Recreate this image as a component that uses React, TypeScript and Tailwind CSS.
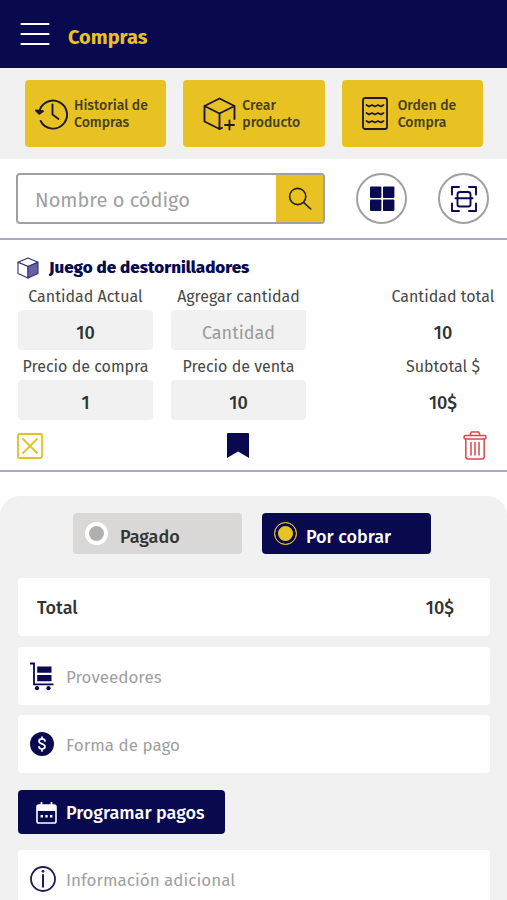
import { useState } from "react";

const MenuIcon = () => (
  <svg width="30" height="24" viewBox="0 0 30 24" fill="none" stroke="white" strokeWidth="2.2" strokeLinecap="round">
    <path d="M1.5 2H28.5M1.5 12H28.5M1.5 22H28.5" />
  </svg>
);

const HistoryIcon = () => (
  <svg width="33" height="32" viewBox="0 0 33 32" fill="none" stroke="#1d1838" strokeWidth="1.9" strokeLinecap="round" strokeLinejoin="round">
    <path d="M4.2 14.5A14 14 0 1 1 5.6 23" />
    <path d="M1 12.5L4.3 15.8L8 13.2Z" fill="#1d1838" />
    <path d="M17.5 6.5V16.5L23.5 21" />
  </svg>
);

const CreateIcon = () => (
  <svg width="33" height="34" viewBox="0 0 33 34" fill="none" stroke="#1d1838" strokeWidth="1.9" strokeLinecap="round" strokeLinejoin="round">
    <path d="M16.5 1.5L31.5 9L16.5 16.5L1.5 9ZM1.5 9V24.5L16.5 32V16.5M31.5 9V22" />
    <path d="M26.5 23.5V32.5M22 28H31M16.5 32L19 30.8" />
  </svg>
);

const OrderIcon = () => (
  <svg width="26" height="33" viewBox="0 0 26 33" fill="none" stroke="#1d1838" strokeWidth="1.8" strokeLinecap="round" strokeLinejoin="round">
    <rect x="1" y="1" width="24" height="31" rx="2" />
    <path d="M4.5 8L7 9.5L10 8L13 9.5L16 8L19 9.5L21.5 8M4.5 16L7 17.5L10 16L13 17.5L16 16L19 17.5L21.5 16M4.5 24L7 25.5L10 24L13 25.5L16 24L19 25.5L21.5 24" />
  </svg>
);

const SearchIcon = () => (
  <svg width="24" height="24" viewBox="0 0 24 24" fill="none" stroke="#26221c" strokeWidth="1.6" strokeLinecap="round">
    <circle cx="9.7" cy="9.5" r="8.1" />
    <path d="M15.5 15.3L22.7 22" />
  </svg>
);

const GridIcon = () => (
  <svg width="26" height="26" viewBox="0 0 26 26" fill="#09094f">
    <rect x="1" y="0.5" width="11.4" height="11.4" rx="1" />
    <rect x="14" y="0.5" width="11.4" height="11.4" rx="1" />
    <rect x="1" y="13.6" width="11.4" height="11.4" rx="1" />
    <rect x="14" y="13.6" width="11.4" height="11.4" rx="1" />
  </svg>
);

const ScanIcon = () => (
  <svg width="28" height="28" viewBox="0 0 28 28" fill="none" stroke="#09094f" strokeWidth="1.9" strokeLinecap="round" strokeLinejoin="round">
    <path d="M2 9.5V2H9M19 2H26V9.5M26 18.5V26H19M9 26H2V18.5" />
    <path d="M7.5 12.5V9.5Q7.5 7 10 7H18Q20.5 7 20.5 9.5V12.5M7.5 14V19.5Q7.5 21.5 9.5 21.5H18.5Q20.5 21.5 20.5 19.5V14" />
    <path d="M5.5 13.3H22.5" />
  </svg>
);

const CubeIcon = () => (
  <svg width="22" height="22" viewBox="0 0 22 22" strokeLinejoin="round" stroke="#34336f" strokeWidth="1.1">
    <path d="M11 1L21 5.2L11 9.6L1 5.2Z" fill="white" />
    <path d="M1 5.2L11 9.6V21L1 16.5Z" fill="white" />
    <path d="M21 5.2L11 9.6V21L21 16.5Z" fill="#6462a2" />
  </svg>
);

const CloseBoxIcon = () => (
  <svg width="26" height="26" viewBox="0 0 26 26" fill="none" stroke="#e5be2b" strokeWidth="1.8" strokeLinecap="round">
    <rect x="1" y="1" width="24" height="24" rx="1.5" />
    <path d="M6 6L20 20M20 6L6 20" />
  </svg>
);

const BookmarkIcon = () => (
  <svg width="22" height="25" viewBox="0 0 22 25" fill="#09094f">
    <path d="M1 0H21Q22 0 22 1V25L11 18.5L0 25V1Q0 0 1 0Z" />
  </svg>
);

const TrashIcon = () => (
  <svg width="24" height="29" viewBox="0 0 24 29" fill="none" stroke="#d8494c" strokeWidth="1.5" strokeLinecap="round" strokeLinejoin="round">
    <path d="M7 4.5L8.2 1H15.8L17 4.5" />
    <rect x="1" y="4.5" width="22" height="3.6" rx="1.6" />
    <path d="M2.8 8.1V25.5Q2.8 28 5.3 28H18.7Q21.2 28 21.2 25.5V8.1" />
    <path d="M8 11.5V24M12 11.5V24M16 11.5V24" />
  </svg>
);

const CartIcon = () => (
  <svg width="24" height="29" viewBox="0 0 24 29" fill="none" stroke="#09094f">
    <path d="M0 1.5H4V22.3H23.5" strokeWidth="1.8" />
    <path d="M7.2 4.5H21.5V10.7H7.2ZM7.2 13H21.5V19.2H7.2Z" fill="#09094f" stroke="none" />
    <circle cx="7" cy="26.2" r="2.1" fill="#09094f" stroke="none" />
    <circle cx="18.5" cy="26.2" r="2.1" fill="#09094f" stroke="none" />
  </svg>
);

const DollarIcon = () => (
  <svg width="24" height="24" viewBox="0 0 24 24" fill="none" stroke="white" strokeWidth="1.7" strokeLinecap="round">
    <circle cx="12" cy="12" r="12" fill="#09094f" stroke="none" />
    <path d="M15 9C15 7.6 13.8 6.9 12 6.9S9 7.8 9 9.3C9 12.6 15 11.2 15 14.6C15 16.1 13.8 17 12 17S9 16.2 9 14.8M12 5V6.9M12 17V19" />
  </svg>
);

const CalendarIcon = () => (
  <svg width="21" height="22" viewBox="0 0 21 22" fill="none">
    <path d="M5.5 0.8V4M15.5 0.8V4" stroke="white" strokeWidth="1.8" strokeLinecap="round" />
    <rect x="1" y="3" width="19" height="18" rx="1.8" stroke="white" strokeWidth="1.6" />
    <path d="M1 3H20V9H1Z" fill="white" />
    <path d="M4.6 13H7V15.4H4.6ZM9.3 13H11.7V15.4H9.3ZM14 13H16.4V15.4H14Z" fill="white" />
  </svg>
);

const InfoIcon = () => (
  <svg width="26" height="26" viewBox="0 0 26 26" fill="none" stroke="#1c1a62">
    <circle cx="13" cy="13" r="12" strokeWidth="1.8" />
    <path d="M13 8.2V21.5" strokeWidth="2" />
    <circle cx="13" cy="5.3" r="1.4" fill="#1c1a62" stroke="none" />
  </svg>
);

const actions = [
  { lines: ["Historial de", "Compras"], Icon: HistoryIcon, style: "pl-[10px] gap-[6px]" },
  { lines: ["Crear", "producto"], Icon: CreateIcon, style: "pl-5 gap-[6px]" },
  { lines: ["Orden de", "Compra"], Icon: OrderIcon, style: "pl-5 gap-[10px]" },
];

function Field({ id, label, value, placeholder }: { id: string; label: string; value?: string; placeholder?: string }) {
  return (
    <div className="flex flex-col items-center">
      <label htmlFor={id} className="text-base leading-[26px] whitespace-nowrap">
        {label}
      </label>
      <input
        id={id}
        defaultValue={value}
        placeholder={placeholder}
        className="h-10 w-full rounded-sm bg-[#f1f1f1] pt-[6px] text-center text-lg font-medium text-[#333] outline-none placeholder:font-normal placeholder:text-[#9b9b9b]"
      />
    </div>
  );
}

function Total({ label, value }: { label: string; value: string }) {
  return (
    <div className="flex w-[106px] flex-col items-center justify-self-end">
      <span className="text-base leading-[26px] whitespace-nowrap">{label}</span>
      <span className="flex h-10 items-center pt-[6px] text-lg font-medium text-[#333]">{value}</span>
    </div>
  );
}

function DetailInput({ id, label, Icon }: { id: string; label: string; Icon: () => React.ReactNode }) {
  return (
    <div className="flex h-[58px] items-center rounded bg-white pl-3">
      <label htmlFor={id} aria-label={label} className="flex w-9 shrink-0">
        <Icon />
      </label>
      <input
        id={id}
        placeholder={label}
        className="h-full min-w-0 flex-1 bg-transparent pt-[2px] text-[17px] outline-none placeholder:text-[#a0a0a0]"
      />
    </div>
  );
}

export default function App() {
  const [status, setStatus] = useState("cobrar");

  return (
    <div className="min-h-screen bg-white font-['Fira_Sans','Noto_Sans',sans-serif] text-[#484848]">
      <header className="flex h-[68px] items-center gap-[18px] bg-[#09094f] pl-5">
        <button aria-label="Menú">
          <MenuIcon />
        </button>
        <h1 className="pt-[6px] text-xl font-bold text-[#e8c222]">Compras</h1>
      </header>

      <nav className="grid grid-cols-3 gap-[17px] bg-[#f1f1f1] py-3 pr-6 pl-[25px]">
        {actions.map(({ lines, Icon, style }) => (
          <button key={lines[0]} className={`flex h-[67px] items-center rounded bg-[#e8c222] text-left ${style}`}>
            <Icon />
            <span className="text-sm leading-[17px] font-medium whitespace-nowrap text-[#45401c]">
              {lines[0]}
              <br />
              {lines[1]}
            </span>
          </button>
        ))}
      </nav>

      <div className="flex items-center border-b-2 border-[#a9a8c0] py-[14px] pr-[18px] pl-4">
        <form className="flex h-[51px] flex-1 overflow-hidden rounded border-2 border-[#a0a0a0]" onSubmit={(e) => e.preventDefault()}>
          <input
            aria-label="Nombre o código"
            placeholder="Nombre o código"
            className="min-w-0 flex-1 pt-[2px] pl-[17px] text-xl outline-none placeholder:text-[#a0a0a0]"
          />
          <button aria-label="Buscar" className="flex w-[47px] items-center justify-center bg-[#e8c222]">
            <SearchIcon />
          </button>
        </form>
        <button aria-label="Ver cuadrícula" className="ml-[31px] flex size-[51px] items-center justify-center rounded-full border-2 border-[#a0a0a0]">
          <GridIcon />
        </button>
        <button aria-label="Escanear código" className="ml-[31px] flex size-[51px] items-center justify-center rounded-full border-2 border-[#a0a0a0]">
          <ScanIcon />
        </button>
      </div>

      <section className="border-b-2 border-[#a9a8c0] pt-[14px] pb-[10px]">
        <div className="flex items-center gap-[10px] pb-[2px] pl-[17px]">
          <CubeIcon />
          <h2 className="text-[17px] leading-7 font-extrabold text-[#09094f]">Juego de destornilladores</h2>
        </div>
        <div className="grid grid-cols-[135px_135px_1fr] gap-x-[18px] gap-y-1 pr-[11px] pl-[18px]">
          <Field id="actual" label="Cantidad Actual" value="10" />
          <Field id="agregar" label="Agregar cantidad" placeholder="Cantidad" />
          <Total label="Cantidad total" value="10" />
          <Field id="compra" label="Precio de compra" value="1" />
          <Field id="venta" label="Precio de venta" value="10" />
          <Total label="Subtotal $" value="10$" />
        </div>
        <div className="grid grid-cols-[135px_135px_1fr] items-center gap-x-[18px] pt-[11px] pr-5 pl-[17px]">
          <button aria-label="Quitar" className="justify-self-start">
            <CloseBoxIcon />
          </button>
          <button aria-label="Guardar" className="justify-self-center">
            <BookmarkIcon />
          </button>
          <button aria-label="Eliminar" className="justify-self-end">
            <TrashIcon />
          </button>
        </div>
      </section>

      <section className="mt-6 rounded-t-[20px] bg-[#f1f1f1] pt-[17px] pr-[17px] pl-[18px]">
        <div className="flex justify-center gap-5 pr-1">
          {[
            { id: "pagado", label: "Pagado" },
            { id: "cobrar", label: "Por cobrar" },
          ].map(({ id, label }) => {
            const checked = status === id;
            return (
              <label
                key={id}
                className={`flex h-[41px] w-[169px] items-center rounded-sm pl-3 text-lg font-medium ${
                  checked ? "gap-[9px] bg-[#09094f] text-white" : "gap-3 bg-[#dad8d7] text-[#333]"
                }`}
              >
                <input
                  type="radio"
                  name="estado"
                  checked={checked}
                  onChange={() => setStatus(id)}
                  className={`size-[23px] appearance-none rounded-full ${
                    checked
                      ? "border border-[#e8c222] bg-[#e8c222] shadow-[inset_0_0_0_3px_#09094f]"
                      : "border-4 border-white bg-[#b0b0b0]"
                  }`}
                />
                <span className="pt-[6px]">{label}</span>
              </label>
            );
          })}
        </div>

        <div className="mt-6 flex h-[58px] items-center justify-between rounded bg-white pt-[2px] pr-9 pl-[19px] text-lg font-medium text-[#333]">
          <span>Total</span>
          <span>10$</span>
        </div>
        <div className="mt-[11px] flex flex-col gap-[10px]">
          <DetailInput id="proveedores" label="Proveedores" Icon={CartIcon} />
          <DetailInput id="forma" label="Forma de pago" Icon={DollarIcon} />
        </div>
        <button className="mt-[17px] flex h-11 w-[207px] items-center gap-[9px] rounded-sm bg-[#09094f] pt-[2px] pl-[18px] text-lg font-medium whitespace-nowrap text-white">
          <CalendarIcon />
          Programar pagos
        </button>
        <div className="mt-4">
          <DetailInput id="info" label="Información adicional" Icon={InfoIcon} />
        </div>
      </section>
    </div>
  );
}
